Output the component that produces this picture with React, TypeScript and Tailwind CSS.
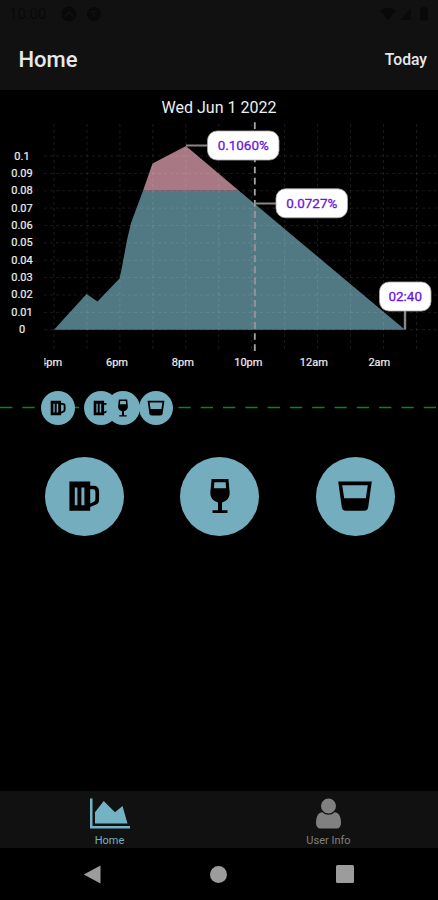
import type { ReactNode } from 'react';

type DrinkKind = 'beer' | 'wine' | 'spirit';

const yLabels = ['0.1', '0.09', '0.08', '0.07', '0.06', '0.05', '0.04', '0.03', '0.02', '0.01', '0'];

const xLabels = [
  { x: 51.2, label: '4pm' },
  { x: 117, label: '6pm' },
  { x: 182.8, label: '8pm' },
  { x: 248.3, label: '10pm' },
  { x: 313.8, label: '12am' },
  { x: 379.3, label: '2am' },
];

const loggedDrinks: { x: number; kind: DrinkKind }[] = [
  { x: 57.5, kind: 'beer' },
  { x: 100.8, kind: 'beer' },
  { x: 123, kind: 'wine' },
  { x: 155.7, kind: 'spirit' },
];

function DrinkIcon({ kind, className }: { kind: DrinkKind; className?: string }) {
  return (
    <svg viewBox="0 0 40 40" className={className} fill="#000" fillRule="evenodd">
      {kind === 'beer' && (
        <path d="M5.4 5.5h20.8v4.3h3.2q5.700 0 5.700 5.700v8.200q0 3.400-3 4.800l-5.900 2.600v3.600H5.4zM10.800 11.600v17.600h2.600V11.600zM17.400 11.600v17.600h3V11.600zM26.200 13.300v14.100l3.700-1.700q1.500-.700 1.500-2.400v-7.600q0-2.400-2.200-2.400z" />
      )}
      {kind === 'wine' && (
        <path d="M11.600 3h16.800l1.300 13.500q.3 7.700-7.700 9.900v7.900h5.500V37h-15v-2.700H18v-7.900q-8-2.200-7.700-9.900zM14.400 6.200l-.5 6.100h12.200l-.5-6.100z" />
      )}
      {kind === 'spirit' && (
        <path d="M3.200 5.500h33.600l-3.600 25.800q-.5 3.500-4 3.500H10.800q-3.500 0-4-3.500zM7.200 9.200l2 13h21.600l2-13z" />
      )}
    </svg>
  );
}

function Callout({ x, y, width, children }: { x: number; y: number; width: number; children: ReactNode }) {
  return (
    <g>
      <rect x={x} y={y} width={width} height="29" rx="9.5" fill="#fff" stroke="#aaa" strokeWidth="0.8" />
      <text
        x={x + width / 2}
        y={y + 18.8}
        textAnchor="middle"
        className="text-[13.4px]"
        fill="#6a14e0"
        stroke="#6a14e0"
        strokeWidth="0.3"
      >
        {children}
      </text>
    </g>
  );
}

function Chart() {
  return (
    <svg width="438" height="256" viewBox="0 120 438 256" className="block">
      <defs>
        <clipPath id="plot">
          <rect x="44.5" y="120" width="394" height="256" />
        </clipPath>
      </defs>

      {/* above and below the 0.08 limit */}
      <polygon points="143,190.7 152.5,163.5 186,146 239,190.7" fill="#a87885" />
      <polygon
        points="54,329.8 86.5,294 97.5,301.5 119.5,278.5 122,267 127,240 131,223 143,190.7 239,190.7 405,329.8"
        fill="#517983"
      />

      <g stroke="#fff" strokeOpacity="0.1" strokeDasharray="3 3">
        {yLabels.map((label, i) => (
          <line key={label} x1="44" x2="438" y1={156 + i * 17.37} y2={156 + i * 17.37} />
        ))}
        {Array.from({ length: 12 }, (_, i) => (
          <line key={i} x1={54 + i * 32.95} x2={54 + i * 32.95} y1="124" y2="352" />
        ))}
      </g>

      <g strokeWidth="1.8" strokeDasharray="6.6 4.5">
        <line x1="254.8" x2="254.8" y1="122.3" y2="352" stroke="#a5a5a5" />
        <line x1="254.8" x2="254.8" y1="211.1" y2="329" stroke="#948f96" />
      </g>

      <g fill="none" stroke="#888" strokeWidth="2">
        <path d="M186 145.5h22" />
        <path d="M254.5 203.5h22" />
        <path d="M405 310v19.5" strokeWidth="2.4" />
      </g>

      <g fill="#eee" stroke="#eee" strokeWidth="0.2" textAnchor="middle" className="text-[11px]">
        {yLabels.map((label, i) => (
          <text key={label} x="22" y={159.5 + i * 17.37}>
            {label}
          </text>
        ))}
        <g clipPath="url(#plot)">
          {xLabels.map(({ x, label }) => (
            <text key={label} x={x} y="366">
              {label}
            </text>
          ))}
        </g>
      </g>

      <Callout x={207.5} y={131} width={71.5}>0.1060%</Callout>
      <Callout x={276} y={188.8} width={71.5}>0.0727%</Callout>
      <Callout x={379.5} y={282} width={51.5}>02:40</Callout>
    </svg>
  );
}

function Timeline() {
  return (
    <div className="relative h-[36px]">
      <svg width="438" height="36" className="block">
        <line x1="0" x2="438" y1="17.5" y2="17.5" stroke="#0a8224" strokeWidth="1.5" strokeDasharray="12.3 10" />
      </svg>
      {loggedDrinks.map(({ x, kind }) => (
        <div
          key={x}
          className="absolute top-[0.5px] flex size-[34px] -translate-x-1/2 items-center justify-center rounded-full bg-[#74aebe]"
          style={{ left: x }}
        >
          <DrinkIcon kind={kind} className="size-5" />
        </div>
      ))}
    </div>
  );
}

function StatusBar() {
  return (
    <div className="flex h-[28px] items-center justify-between pr-2 pl-[9px] text-[#090909]">
      <div className="flex items-center gap-[10px]">
        <span className="w-[42px] text-[15px]">10:00</span>
        <svg width="41" height="16" viewBox="0 0 41 16" fill="currentColor">
          <circle cx="8" cy="8" r="7.5" />
          <path d="M4 10.5l4-4.5 4 4.5" fill="none" stroke="#111" strokeWidth="1.5" />
          <circle cx="33" cy="8" r="7" />
          <path d="M29 5.500h7M33 5.500v6" stroke="#111" strokeWidth="1.5" />
        </svg>
      </div>
      <svg width="50" height="16" viewBox="0 0 50 16" fill="currentColor">
        <path d="M0 4.500q8-6 16 0L8 14z" />
        <path d="M20 14L31 2v12z" />
        <path d="M40 2.500h2V1h4v1.500h2V14.500h-8z" />
      </svg>
    </div>
  );
}

export default function App() {
  return (
    <div className="flex h-[900px] w-[438px] flex-col overflow-hidden bg-black font-['Roboto',sans-serif]">
      <header className="h-[90px] bg-[#111]">
        <StatusBar />
        <div className="flex h-[63px] items-center justify-between pr-[11px] pl-[18.5px] text-[#e8e8e8]">
          <h1 className="text-[22px] font-medium">Home</h1>
          <span className="text-[15.7px] font-medium">Today</span>
        </div>
      </header>

      <main className="flex-1">
        <h2 className="h-[30px] pt-[6px] text-center text-[16px] leading-6 text-[#eee]">Wed Jun 1 2022</h2>
        <Chart />
        <div className="pt-[14px]">
          <Timeline />
        </div>
        <div className="flex justify-between pt-[30.5px] pr-[43.5px] pl-[44.5px]">
          {(['beer', 'wine', 'spirit'] as const).map((kind) => (
            <button key={kind} className="flex size-[79px] items-center justify-center rounded-full bg-[#74aebe]">
              <DrinkIcon kind={kind} className="size-10" />
            </button>
          ))}
        </div>
      </main>

      <nav className="grid h-[57px] grid-cols-2 bg-[#111] text-[11px]">
        <div className="flex flex-col items-center pt-[5px] text-[#74b3c4]">
          <svg width="40" height="35" viewBox="0 0 2048 1792" fill="currentColor">
            <path d="M2048 1536v128H0V128h128v1408zM1664 512l256 896H256V832l448-576 576 576z" />
          </svg>
          <span className="mt-[2px] leading-4">Home</span>
        </div>
        <div className="flex flex-col items-center pt-[5px] text-[#808080]">
          <svg width="25" height="35" viewBox="0 0 1280 1792" fill="currentColor">
            <path d="M1280 1399q0 109-62.500 187t-150.500 78H213q-88 0-150.500-78T0 1399q0-85 8.500-160.500t31.500-152 58.500-131 94-89T327 832q131 128 313 128t313-128q76 0 134.500 34.500t94 89 58.500 131 31.500 152 8.500 160.500zM1024 512q0 159-112.500 271.500T640 896 368.500 783.500 256 512t112.500-271.500T640 128t271.500 112.500T1024 512z" />
          </svg>
          <span className="mt-[2px] leading-4">User Info</span>
        </div>
      </nav>

      <div className="flex h-[52px] items-center justify-between pr-[84px] pl-[83px] text-[#9c9c9c]">
        <svg width="18" height="19" viewBox="0 0 18 19" fill="currentColor">
          <path d="M17.500.5v18L.8 9.500z" />
        </svg>
        <div className="size-[17px] rounded-full bg-current" />
        <div className="size-[18px] rounded-[1.5px] bg-current" />
      </div>
    </div>
  );
}
